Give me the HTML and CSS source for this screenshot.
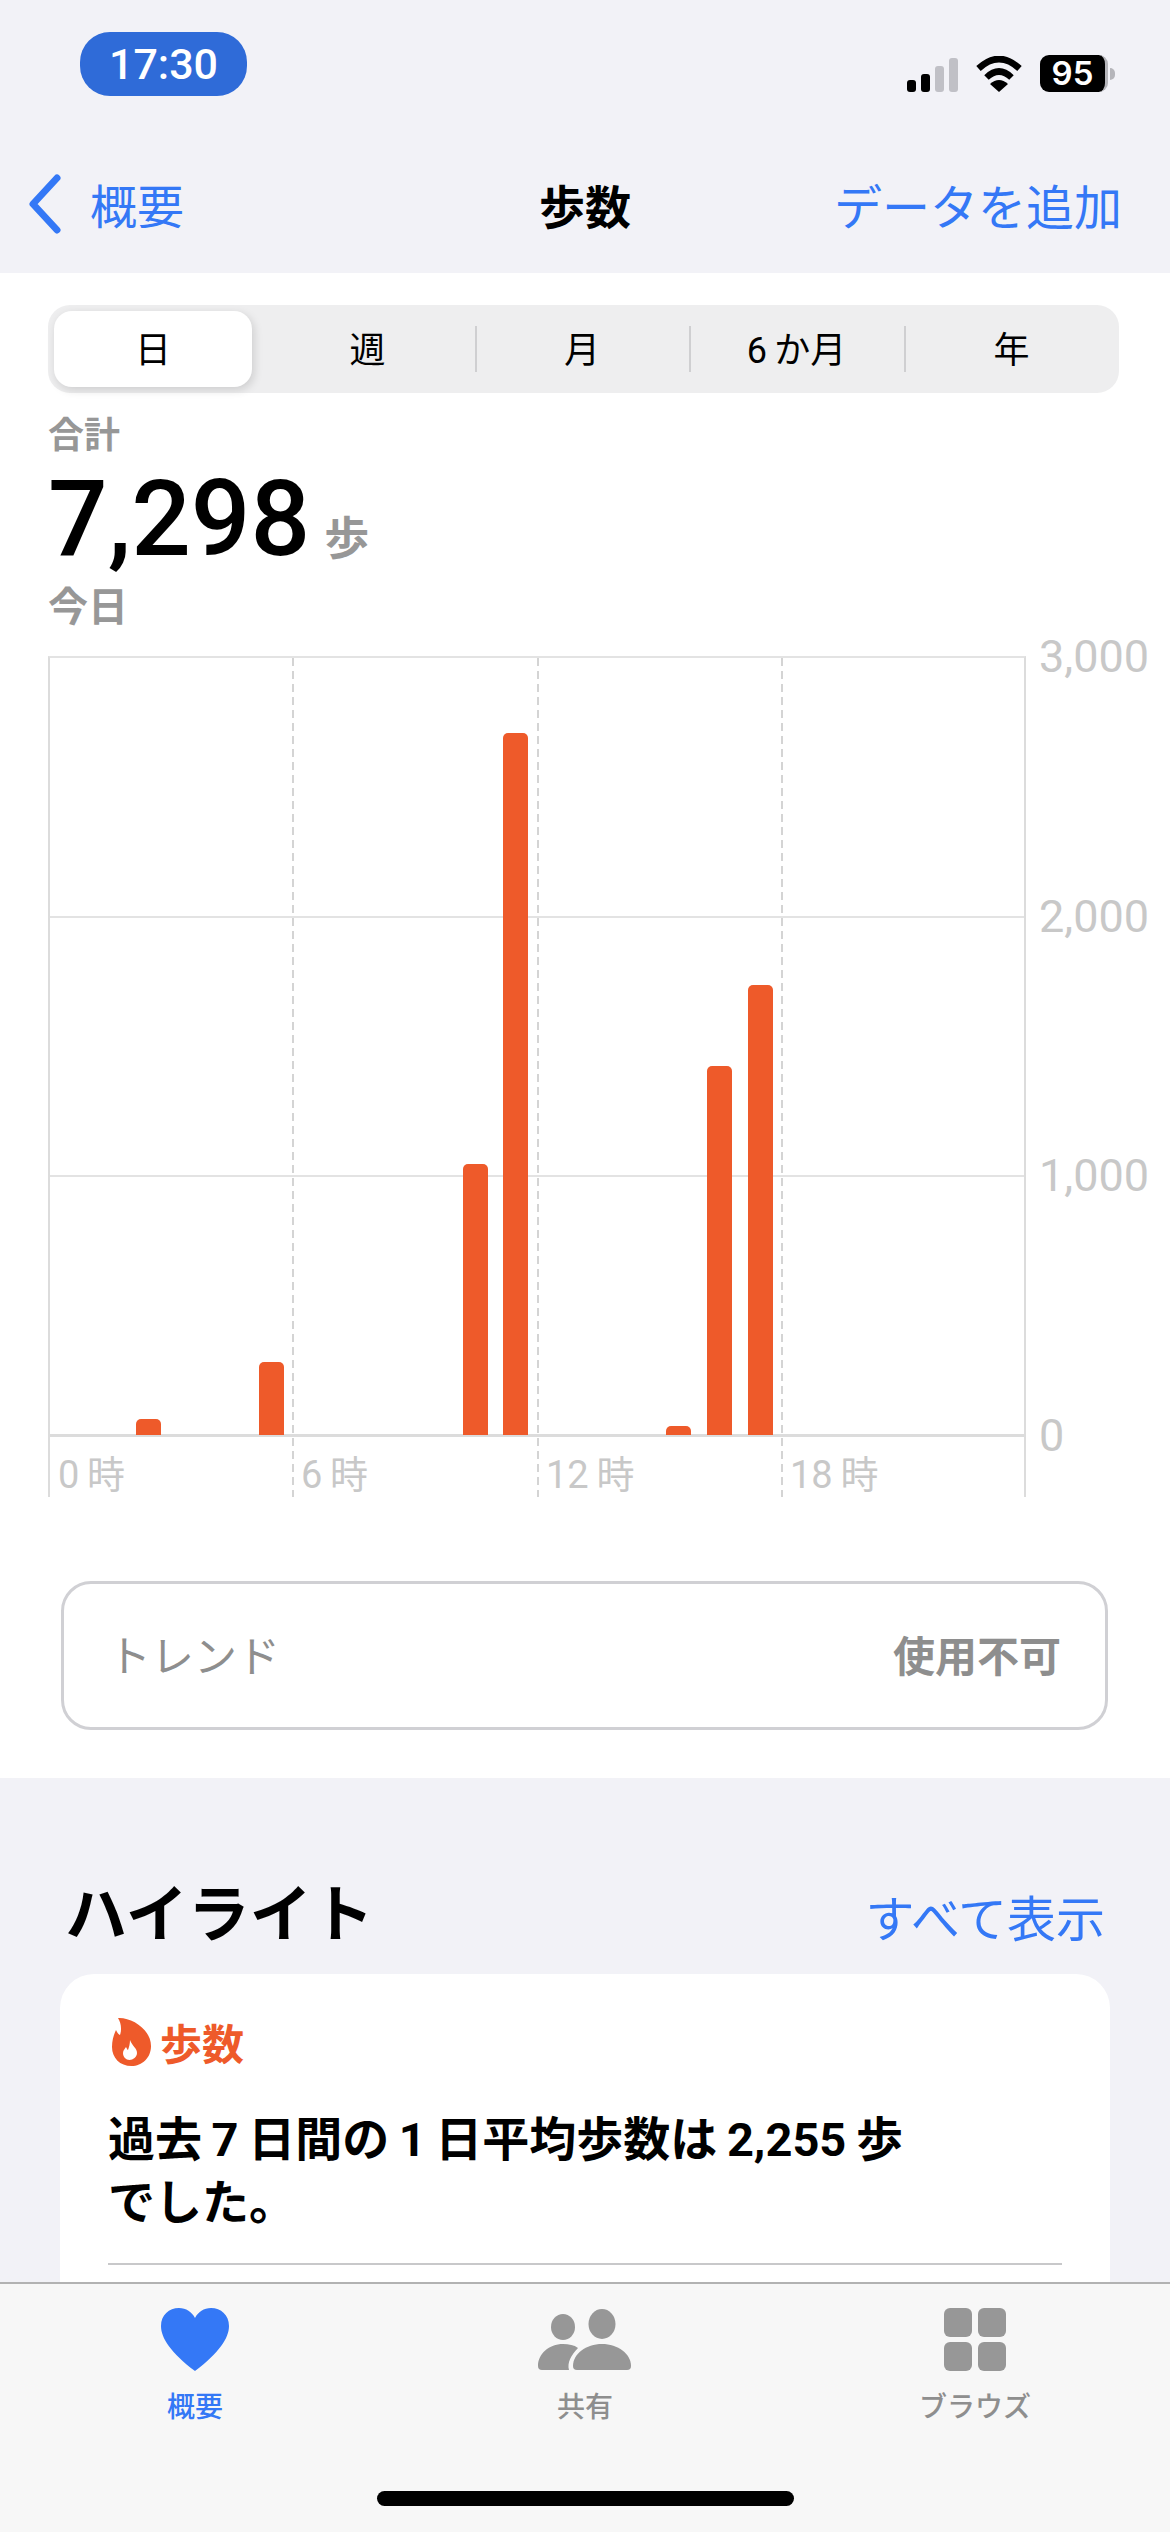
FILE: index.html
```html
<!DOCTYPE html>
<html lang="ja">
<head>
    <meta charset="utf-8">
    <title>歩数</title>
    <link rel="stylesheet" href="styles.css">
</head>
<body>
    <div class="screen">
        <header class="top">
            <div class="status">
                <div class="time">17:30</div>
                <div class="status-icons">
                    <div class="signal">
                        <span class="sig-1"></span><span class="sig-2"></span><span class="sig-3"></span><span class="sig-4"></span>
                    </div>
                    <svg class="wifi" width="48" height="36" viewBox="0 0 48 36">
                        <path d="M3.5 12.5Q24-6.5 44.500 12.500" fill="none" stroke="#000" stroke-width="6.500"/>
                        <path d="M11.500 21.500Q24 9.500 36.500 21.500" fill="none" stroke="#000" stroke-width="6.500"/>
                        <path d="M24 36L15 28Q24 20 33 28Z" fill="#000"/>
                    </svg>
                    <div class="battery"><div class="battery-body">95</div><div class="battery-nub"></div></div>
                </div>
            </div>
            <nav class="nav">
                <a class="back">
                    <svg width="34" height="60" viewBox="0 0 34 60"><path d="M29 4L5 30L29 56" fill="none" stroke="#3478f6" stroke-width="7" stroke-linecap="round" stroke-linejoin="round"/></svg>
                    <span>概要</span>
                </a>
                <h1 class="nav-title">歩数</h1>
                <a class="nav-add">データを追加</a>
            </nav>
        </header>

        <section class="summary">
            <div class="segments">
                <div class="seg seg-active"><span>日</span></div>
                <div class="seg"><span>週</span></div>
                <div class="seg seg-line"><span>月</span></div>
                <div class="seg seg-line"><span>6&thinsp;か月</span></div>
                <div class="seg seg-line"><span>年</span></div>
            </div>

            <div class="total-label">合計</div>
            <div class="total">7,298<span class="total-unit">歩</span></div>
            <div class="total-date">今日</div>

            <div class="chart">
                <div class="plot">
                    <div class="hour hour-first">0&thinsp;時</div>
                    <div class="hour">6&thinsp;時</div>
                    <div class="hour">12&thinsp;時</div>
                    <div class="hour">18&thinsp;時</div>
                    <div class="rows"><div></div><div></div><div></div></div>
                    <div class="bars">
                        <div class="bar" style="grid-column:3;height:16px"></div>
                        <div class="bar" style="grid-column:6;height:73px"></div>
                        <div class="bar" style="grid-column:11;height:271px"></div>
                        <div class="bar" style="grid-column:12;height:702px"></div>
                        <div class="bar" style="grid-column:16;height:9px"></div>
                        <div class="bar" style="grid-column:17;height:369px"></div>
                        <div class="bar" style="grid-column:18;height:450px"></div>
                    </div>
                </div>
                <div class="y-axis">
                    <span>3,000</span><span>2,000</span><span>1,000</span><span>0</span>
                </div>
            </div>

            <div class="trend">
                <span class="trend-name">トレンド</span>
                <span class="trend-value">使用不可</span>
            </div>
        </section>

        <section class="highlights">
            <div class="section-head">
                <h2>ハイライト</h2>
                <a>すべて表示</a>
            </div>
            <div class="card">
                <div class="card-head">
                    <svg width="39" height="49" viewBox="0 0 39 49">
                        <path d="M6 1C19 0 39 12 39 29C39 41 30 49 19.500 49C8 49 0 41 0 30C0 23 2 17 4 13C5 15 6 17 8 18C10 12 9 6 6 1Z" fill="#ee5a2a"/>
                        <path d="M18 23C20 29 25 31 25 36C25 40 21 43 17.500 43C14 43 11 40 11 36C11 33 13 32 14 30C15 32 15.500 33 16 33C17 30 18 27 18 23Z" fill="#fff"/>
                    </svg>
                    <span>歩数</span>
                </div>
                <p class="card-text">過去&thinsp;7&thinsp;日間の&thinsp;1&thinsp;日平均歩数は&thinsp;2,255&thinsp;歩<br>でした。</p>
                <div class="card-rule"></div>
            </div>
        </section>

        <footer class="tabbar">
            <div class="tabs">
                <div class="tab tab-active">
                    <svg width="68" height="63" viewBox="0 0 68 63"><path d="M34 63C10 45 0 30 0 18C0 7 8 0 18 0C25 0 31 4 34 10C37 4 43 0 50 0C60 0 68 7 68 18C68 30 58 45 34 63Z" fill="#3478f6"/></svg>
                    <span>概要</span>
                </div>
                <div class="tab">
                    <svg width="94" height="63" viewBox="0 0 94 63" fill="#979797">
                        <ellipse cx="25" cy="19" rx="12" ry="13"/>
                        <ellipse cx="64" cy="16" rx="13.500" ry="15"/>
                        <path d="M39 62H89A4 4 0 0 0 93 58C93 46 80 36 64 36C48 36 35 46 35 58A4 4 0 0 0 39 62Z"/>
                        <path d="M4 62H31C29 55 33 47 40 40C36 37 31 36 25 36C11 36 0 46 0 58A4 4 0 0 0 4 62Z"/>
                    </svg>
                    <span>共有</span>
                </div>
                <div class="tab">
                    <div class="grid-icon"><i></i><i></i><i></i><i></i></div>
                    <span>ブラウズ</span>
                </div>
            </div>
            <div class="home-bar"></div>
        </footer>
    </div>
</body>
</html>
```

FILE: styles.css
```css
* { box-sizing: border-box; }
html, body { margin: 0; padding: 0; }
body { background-color: #f2f2f7; color: #000; font-family: Roboto, "Noto Sans CJK JP", sans-serif; }
h1, h2, p { margin: 0; }

.screen { position: relative; width: 1170px; height: 2532px; overflow: hidden; }

/* status bar + navigation */
.top { height: 273px; background-color: #f2f2f7; }
.status { display: flex; justify-content: space-between; align-items: flex-end; height: 96px; padding: 32px 55px 4px 80px; }
.time { width: 167px; height: 64px; margin-bottom: -4px; border-radius: 30px; background-color: #2f6bd8; color: #fff; font-size: 43px; font-weight: 500; line-height: 64px; text-align: center; }
.status-icons { display: flex; align-items: flex-end; }
.signal { display: flex; align-items: flex-end; gap: 5px; margin-right: 17px; }
.signal span { display: block; width: 9px; border-radius: 3px; background-color: #000; }
.sig-1 { height: 12px; }
.sig-2 { height: 18px; }
.sig-3 { height: 26px; background-color: #c0c0c6 !important; }
.sig-4 { height: 34px; background-color: #c0c0c6 !important; }
.wifi { margin-right: 17px; }
.battery { display: flex; align-items: center; }
.battery-body { width: 68px; height: 37px; border-radius: 9px; border-right: 3px solid #b5b5ba; background-color: #000; color: #fff; font-family: Inter, sans-serif; font-size: 33px; font-weight: 600; line-height: 37px; text-align: center; }
.battery-nub { width: 5px; height: 12px; margin-left: 2px; border-radius: 0 6px 6px 0; background-color: #b5b5ba; }

.nav { display: grid; grid-template-columns: 1fr auto 1fr; align-items: center; height: 177px; padding: 38px 0 0; }
.back { display: flex; align-items: center; gap: 28px; margin-left: 28px; color: #3478f6; font-size: 47px; }
.nav-title { font-size: 46px; font-weight: 700; }
.nav-add { margin-right: 48px; color: #3478f6; font-size: 48px; text-align: right; }

/* white block with the chart */
.summary { height: 1505px; padding: 32px 0 0; background-color: #fff; }

.segments { display: grid; grid-template-columns: 212px 215px 214px 215px 215px; height: 88px; margin: 0 51px 0 48px; border-radius: 22px; background-color: #eeeeef; }
.seg { position: relative; display: flex; align-items: center; justify-content: center; font-size: 36px; }
.seg span { margin-bottom: 4px; }
.seg-active { margin: 6px 8px 6px 6px; border-radius: 18px; background-color: #fff; box-shadow: 2px 3px 10px rgba(0, 0, 0, 0.14); }
.seg-line::before { content: ""; position: absolute; left: 0; top: 21px; width: 2px; height: 46px; background-color: #cfcfd1; }

.total-label { margin: 23px 0 0 48px; color: #979797; font-size: 36px; font-weight: 700; line-height: 40px; }
.total { height: 120px; margin: 4px 0 0 48px; font-size: 105px; font-weight: 500; line-height: 120px; }
.total-unit { margin-left: 14px; color: #979797; font-size: 45px; font-weight: 700; line-height: 1; }
.total-date { margin: 4px 0 0 48px; color: #979797; font-size: 40px; font-weight: 700; line-height: 48px; }

.chart { display: flex; height: 841px; margin: 24px 0 0 48px; }
.plot { position: relative; display: grid; grid-template-columns: 242px 245px 244px 1fr; width: 978px; height: 841px; border-top: 2px solid #e3e3e3; border-right: 2px solid #dcdcdc; border-left: 2px solid #dcdcdc; }
.hour { display: flex; align-items: flex-end; padding: 0 0 0 9px; background-image: repeating-linear-gradient(#d4d4d4 0 8px, transparent 8px 13px); background-size: 2px 100%; background-repeat: no-repeat; color: #c8c8c8; font-size: 38px; line-height: 44px; }
.hour-first { padding-left: 8px; background-image: none; }

.rows { position: absolute; left: 0; right: 0; top: 0; height: 779px; display: grid; grid-template-rows: repeat(3, 1fr); }
.rows div { border-bottom: 2px solid #e3e3e3; }
.rows div:last-child { border-bottom: 3px solid #dcdcdc; }

.bars { position: absolute; left: -3px; right: -1.5px; top: 0; height: 777px; display: grid; grid-template-columns: repeat(24, 1fr); align-items: end; }
.bar { justify-self: center; width: 25px; border-radius: 5px 5px 0 0; background-color: #ee5a2a; }

.y-axis { display: flex; flex-direction: column; justify-content: space-between; height: 827px; margin: -23px 0 0 13px; color: #c8c8c8; font-size: 45px; line-height: 48px; }

.trend { display: flex; justify-content: space-between; align-items: center; height: 149px; margin: 84px 62px 0 61px; padding: 0 44px 5px 44px; border: 3px solid #d0d0d4; border-radius: 30px; color: #8e8e8e; }
.trend-name { font-size: 43px; }
.trend-value { font-size: 42px; font-weight: 700; }

/* lower grey block */
.highlights { padding: 0 60px; }
.section-head { display: flex; justify-content: space-between; align-items: flex-end; height: 196px; padding: 0 5px 18px 5px; }
.section-head h2 { font-size: 62px; font-weight: 700; line-height: 80px; }
.section-head a { color: #3478f6; font-size: 49px; line-height: 70px; }

.card { height: 500px; padding: 37px 48px 0; border-radius: 34px; background-color: #fff; }
.card-head { display: flex; align-items: center; gap: 9px; margin-left: 4px; color: #ee5a2a; font-size: 42px; font-weight: 700; }
.card-text { margin-top: 36px; font-size: 47px; font-weight: 700; line-height: 63px; }
.card-rule { height: 2px; margin-top: 29px; background-color: #c8c8ca; }

/* bottom tab bar */
.tabbar { position: absolute; left: 0; right: 0; top: 2282px; bottom: 0; border-top: 2px solid #b2b2b2; background-color: #f7f7f7; }
.tabs { display: grid; grid-template-columns: repeat(3, 1fr); padding-top: 24px; }
.tab { display: flex; flex-direction: column; align-items: center; gap: 21px; color: #8e8e8e; font-size: 28px; line-height: 32px; font-weight: 500; }
.tab-active { color: #3478f6; }
.grid-icon { display: grid; grid-template-columns: 28px 28px; grid-template-rows: 29px 29px; gap: 5px 6px; height: 63px; }
.grid-icon i { border-radius: 6px; background-color: #979797; }
.home-bar { width: 417px; height: 15px; margin: 67px auto 0; border-radius: 8px; background-color: #000; }
```
